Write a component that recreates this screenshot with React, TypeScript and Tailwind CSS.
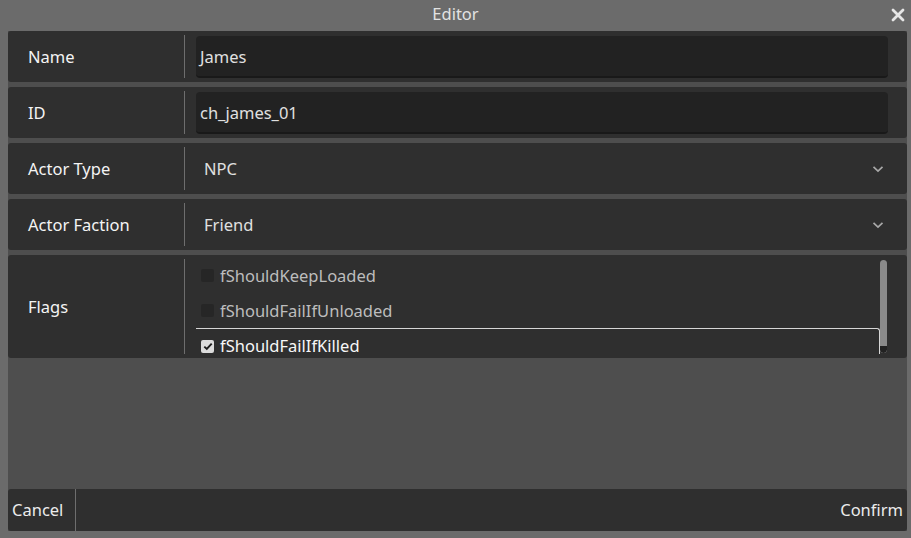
import React from "react";

const font = { fontFamily: '"Noto Sans", "Open Sans", sans-serif' };

function Label({ text }: { text: string }) {
  return (
    <>
      <div className="w-[176px] shrink-0 pl-5 pt-[2px] text-[16.5px] text-[#f4f4f4]">{text}</div>
      <div className="w-px self-stretch my-1 bg-[#6e6e6e]" />
    </>
  );
}

function TextRow({ label, value }: { label: string; value: string }) {
  return (
    <div className="h-[51px] shrink-0 flex items-center bg-[#2f2f2f] rounded-[3px]">
      <Label text={label} />
      <div className="flex-1 self-stretch pl-[11px] pr-[19px] pt-[5px] pb-[4px]">
        <div className="h-full bg-[#222222] rounded-[4px] border-b-2 border-[#191919] flex items-center pl-1 pt-[2px] text-[16.5px] text-[#e0e0e0]">
          {value}
        </div>
      </div>
    </div>
  );
}

function SelectRow({ label, value }: { label: string; value: string }) {
  return (
    <div className="h-[51px] shrink-0 flex items-center bg-[#2f2f2f] rounded-[3px]">
      <Label text={label} />
      <div className="flex-1 flex items-center justify-between pl-[19px] pr-[23px] text-[16.5px] text-[#e0e0e0]">
        <span className="pt-[2px]">{value}</span>
        <svg width="12" height="8" viewBox="0 0 12 8" fill="none">
          <path d="M1.5 1.8 L6 6 L10.5 1.8" stroke="#a8a8a8" strokeWidth="1.7" />
        </svg>
      </div>
    </div>
  );
}

const flags = [
  { name: "fShouldKeepLoaded", checked: false },
  { name: "fShouldFailIfUnloaded", checked: false },
  { name: "fShouldFailIfKilled", checked: true },
];

function FlagsRow() {
  return (
    <div className="h-[103px] shrink-0 flex items-center bg-[#2f2f2f] rounded-[3px]">
      <Label text="Flags" />
      <div className="flex-1 self-stretch pl-[11px] pr-[20px] pt-[3px] pb-[4px] flex">
        <div className="flex-1 overflow-hidden">
          {flags.map((f, i) => (
            <div
              key={f.name}
              className={`h-[35px] flex items-center pl-[5px] gap-[6px] ${
                i === 2 ? "border-t border-r border-[#d6d6d6] rounded-tr-[3px] text-[#f7f7f7]" : "text-[#bdbdbd]"
              }`}
            >
              {f.checked ? (
                <div className="w-[13px] h-[13px] rounded-[2px] bg-[#dcdcdc] flex items-center justify-center">
                  <svg width="10" height="9" viewBox="0 0 10 9" fill="none">
                    <path d="M1.3 4.6 L3.8 7 L8.7 1.6" stroke="#1e1e1e" strokeWidth="1.9" />
                  </svg>
                </div>
              ) : (
                <div className="w-[13px] h-[13px] rounded-[2px] bg-[#262626]" />
              )}
              <span className={`text-[16.5px] ${i === 2 ? "" : "pt-[2px]"}`}>{f.name}</span>
            </div>
          ))}
        </div>
        <div className="relative w-[7px] mt-[2px] mb-[1px] rounded-full bg-[#8a8a8a] overflow-hidden">
          <div className="absolute bottom-0 left-0 right-0 h-[7px] bg-[#222222] rounded-b-full" />
        </div>
      </div>
    </div>
  );
}

export default function App() {
  return (
    <div className="w-[911px] h-[538px] bg-[#6b6b6b] flex flex-col overflow-hidden" style={font}>
      <div className="h-[31px] shrink-0 relative flex items-center justify-center pb-[3px]">
        <span className="text-[16.5px] text-[#e2e2e2]">Editor</span>
        <svg className="absolute right-[6px] top-[8px]" width="14" height="14" viewBox="0 0 14 14" fill="none">
          <path d="M2 2 L12 12 M12 2 L2 12" stroke="#e6e6e6" strokeWidth="2.8" strokeLinecap="round" />
        </svg>
      </div>
      <div className="flex-1 ml-2 mr-1 mb-[7px] bg-[#4e4e4e] flex flex-col gap-[5px]">
        <TextRow label="Name" value="James" />
        <TextRow label="ID" value="ch_james_01" />
        <SelectRow label="Actor Type" value="NPC" />
        <SelectRow label="Actor Faction" value="Friend" />
        <FlagsRow />
        <div className="flex-1" />
        <div className="h-[42px] shrink-0 flex items-stretch bg-[#2f2f2f] rounded-[3px] text-[16.5px] text-[#ececec]">
          <div className="w-[67px] pl-1 flex items-center">Cancel</div>
          <div className="w-px bg-[#6e6e6e]" />
          <div className="flex-1 flex items-center justify-end pr-1">Confirm</div>
        </div>
      </div>
    </div>
  );
}
